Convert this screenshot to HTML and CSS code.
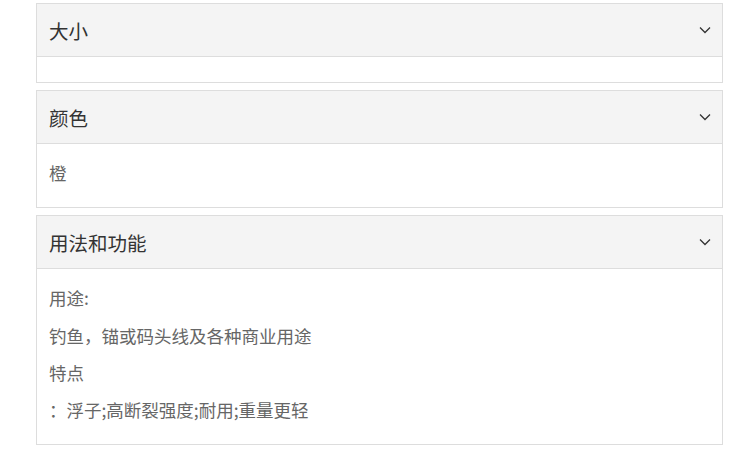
FILE: index.html
```html
<!DOCTYPE html>
<html lang="zh">
<head>
  <meta charset="UTF-8">
  <title>产品属性</title>
  <link rel="stylesheet" href="styles.css">
</head>
<body>
  <div class="accordion">
    <div class="panel">
      <div class="panel-head">
        <span>大小</span>
        <svg class="arrow" width="12" height="8" viewBox="0 0 12 8"><path d="M1 1.5 L6 6.5 L11 1.5" fill="none" stroke="#333" stroke-width="1.3"/></svg>
      </div>
      <div class="panel-body empty"></div>
    </div>

    <div class="panel">
      <div class="panel-head">
        <span>颜色</span>
        <svg class="arrow" width="12" height="8" viewBox="0 0 12 8"><path d="M1 1.5 L6 6.5 L11 1.5" fill="none" stroke="#333" stroke-width="1.3"/></svg>
      </div>
      <div class="panel-body">
        <p>橙</p>
      </div>
    </div>

    <div class="panel">
      <div class="panel-head">
        <span>用法和功能</span>
        <svg class="arrow" width="12" height="8" viewBox="0 0 12 8"><path d="M1 1.5 L6 6.5 L11 1.5" fill="none" stroke="#333" stroke-width="1.3"/></svg>
      </div>
      <div class="panel-body">
        <p>用途:</p>
        <p>钓鱼，锚或码头线及各种商业用途</p>
        <p>特点</p>
        <p>：浮子;高断裂强度;耐用;重量更轻</p>
      </div>
    </div>
  </div>
</body>
</html>
```

FILE: styles.css
```css
body {
  margin: 0;
  padding: 3px 18px 0 36px;
  font-family: "Noto Sans CJK SC", "Liberation Sans", sans-serif;
  background: #fff;
}
.accordion {
  width: 687px;
  display: flex;
  flex-direction: column;
  gap: 7px;
}
.panel {
  border: 1px solid #ddd;
}
.panel-head {
  height: 52px;
  background: #f4f4f4;
  border-bottom: 1px solid #ddd;
  display: flex;
  align-items: center;
  justify-content: space-between;
  padding: 0 11px 0 12px;
  font-size: 19.5px;
  color: #333;
}
.arrow {
  display: block;
}
.panel-body {
  padding: 17px 12px 9px;
}
.panel-body.empty {
  padding: 0;
  height: 25px;
}
.panel-body p {
  margin: 0 0 13.3px;
  font-size: 17.5px;
  line-height: 24px;
  color: #666;
}
```
